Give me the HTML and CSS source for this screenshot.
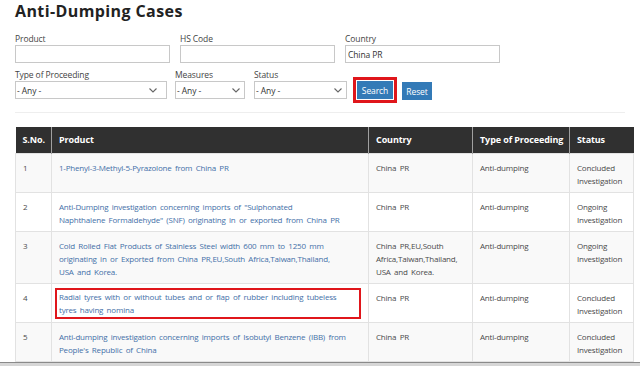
FILE: index.html
```html
<!DOCTYPE html>
<html lang="en">

<head>
    <meta charset="UTF-8" />
    <meta name="viewport" content="width=device-width, initial-scale=1.0" />
    <title>Anti-Dumping Cases</title>
    <link rel="stylesheet" href="styles.css">
</head>

<body>
    <div class="page">
        <h1 class="page-title">Anti-Dumping Cases</h1>

        <form class="filters">
            <div class="filter-row">
                <div class="field field-wide">
                    <label>Product</label>
                    <input type="text" class="text-input">
                </div>
                <div class="field field-wide">
                    <label>HS Code</label>
                    <input type="text" class="text-input">
                </div>
                <div class="field field-wide">
                    <label>Country</label>
                    <input type="text" class="text-input" value="China PR">
                </div>
            </div>

            <div class="filter-row filter-row-second">
                <div class="field field-type">
                    <label>Type of Proceeding</label>
                    <div class="select select-type">
                        <span>- Any -</span>
                        <svg class="chevron" width="8" height="5" viewBox="0 0 8 5"><polyline points="0.5,0.5 4,4 7.5,0.5" /></svg>
                    </div>
                </div>
                <div class="field field-measures">
                    <label>Measures</label>
                    <div class="select">
                        <span>- Any -</span>
                        <svg class="chevron" width="8" height="5" viewBox="0 0 8 5"><polyline points="0.5,0.5 4,4 7.5,0.5" /></svg>
                    </div>
                </div>
                <div class="field field-status">
                    <label>Status</label>
                    <div class="select">
                        <span>- Any -</span>
                        <svg class="chevron" width="8" height="5" viewBox="0 0 8 5"><polyline points="0.5,0.5 4,4 7.5,0.5" /></svg>
                    </div>
                </div>
                <div class="highlight-box">
                    <button type="button" class="btn">Search</button>
                </div>
                <button type="button" class="btn btn-reset">Reset</button>
            </div>
        </form>

        <div class="divider"></div>

        <table class="cases">
            <colgroup>
                <col class="col-sno">
                <col class="col-product">
                <col class="col-country">
                <col class="col-type">
                <col class="col-status">
            </colgroup>
            <thead>
                <tr>
                    <th>S.No.</th>
                    <th>Product</th>
                    <th>Country</th>
                    <th>Type of Proceeding</th>
                    <th>Status</th>
                </tr>
            </thead>
            <tbody>
                <tr>
                    <td>1</td>
                    <td><a href="#">1-Phenyl-3-Methyl-5-Pyrazolone from China PR</a></td>
                    <td>China PR</td>
                    <td>Anti-dumping</td>
                    <td>Concluded Investigation</td>
                </tr>
                <tr>
                    <td>2</td>
                    <td><a href="#">Anti-Dumping investigation concerning imports of "Sulphonated<br>Naphthalene Formaldehyde" (SNF) originating in or exported from China PR</a></td>
                    <td>China PR</td>
                    <td>Anti-dumping</td>
                    <td>Ongoing Investigation</td>
                </tr>
                <tr>
                    <td>3</td>
                    <td><a href="#">Cold Rolled Flat Products of Stainless Steel width 600 mm to 1250 mm originating in or Exported from China PR,EU,South Africa,Taiwan,Thailand,<br>USA and Korea.</a></td>
                    <td>China PR,EU,South Africa,Taiwan,Thailand, USA and Korea.</td>
                    <td>Anti-dumping</td>
                    <td>Ongoing Investigation</td>
                </tr>
                <tr>
                    <td>4</td>
                    <td><a href="#" class="marked">Radial tyres with or without tubes and or flap of rubber including tubeless tyres having nomina</a></td>
                    <td>China PR</td>
                    <td>Anti-dumping</td>
                    <td>Concluded Investigation</td>
                </tr>
                <tr>
                    <td>5</td>
                    <td><a href="#">Anti-dumping investigation concerning imports of Isobutyl Benzene (IBB) from People's Republic of China</a></td>
                    <td>China PR</td>
                    <td>Anti-dumping</td>
                    <td>Concluded Investigation</td>
                </tr>
            </tbody>
        </table>
    </div>
    <div class="bottom-bar"></div>
</body>

</html>
```

FILE: styles.css
```css
:root {
    --text: #4a4a4a;
    --link: #4470a8;
    --border: #e2e2e2;
    --input-border: #c8c8c8;
    --btn: #337ab7;
    --head: #303030;
    --mark: #e0161b;
}

* {
    margin: 0;
    padding: 0;
    box-sizing: border-box;
    font-family: 'Open Sans', 'Noto Sans', sans-serif;
}

body {
    background: #fff;
    color: var(--text);
    font-size: 8.5px;
    letter-spacing: -0.1px;
}

.page {
    padding: 0 15px;
}

.page-title {
    font-size: 16px;
    line-height: 22px;
    font-weight: 700;
    color: #222;
    letter-spacing: 0.4px;
}

.filters {
    margin-top: 11px;
}

.filter-row {
    display: flex;
    gap: 10px;
}

.filter-row-second {
    margin-top: 6px;
    gap: 0;
    align-items: flex-end;
}

.field {
    display: flex;
    flex-direction: column;
}

.field label {
    line-height: 12px;
    color: #444;
}

.field-wide {
    width: 155px;
}

.field-type {
    width: 152px;
}

.field-measures {
    width: 70px;
    margin-left: 8px;
}

.field-status {
    width: 93px;
    margin-left: 9px;
}

.text-input {
    height: 18px;
    border: 1px solid var(--input-border);
    padding: 0 2px;
    font-size: 8.5px;
    letter-spacing: -0.1px;
    color: #333;
    outline: none;
}

.select {
    height: 18px;
    border: 1px solid var(--input-border);
    display: flex;
    align-items: center;
    justify-content: space-between;
    padding: 0 4px 0 1px;
    color: #333;
}

.select-type {
    padding-right: 9px;
}

.chevron {
    fill: none;
    stroke: #666;
    stroke-width: 1.1;
}

.highlight-box {
    margin-left: 6px;
    margin-bottom: -4px;
    border: 3px solid var(--mark);
    padding: 1px;
    display: flex;
}

.btn {
    height: 18px;
    width: 36px;
    border: none;
    background: var(--btn);
    color: #fff;
    font-size: 8.5px;
    letter-spacing: -0.1px;
    cursor: pointer;
}

.btn-reset {
    width: 30px;
    margin-left: 5px;
    margin-bottom: -1px;
}

.divider {
    margin-top: 13px;
    height: 1px;
    background: #eee;
}

.cases {
    margin-top: 14px;
    width: 618px;
    border-collapse: collapse;
    table-layout: fixed;
    font-size: 8px;
    letter-spacing: -0.2px;
    word-spacing: 1.5px;
}

.col-sno { width: 36px; }
.col-product { width: 317px; }
.col-country { width: 104px; }
.col-type { width: 97px; }
.col-status { width: 64px; }

.cases th {
    background: var(--head);
    color: #fff;
    font-size: 9px;
    font-weight: 700;
    letter-spacing: -0.1px;
    word-spacing: 0;
    text-align: left;
    height: 26px;
    padding: 0 7px;
    border-left: 1px solid #a0a0a0;
    white-space: nowrap;
}

.cases th:first-child {
    border-left: none;
}

.cases td {
    padding: 7px 7px 5px;
    line-height: 13px;
    vertical-align: top;
    border: 1px solid var(--border);
}

.cases td:last-child {
    padding-right: 4px;
}

.cases tbody tr:nth-child(odd) {
    background: #f9f9f9;
}

.cases a {
    color: var(--link);
    text-decoration: none;
}

.cases a.marked {
    display: inline-block;
    border: 2px solid var(--mark);
    padding: 0 2px 1px;
    margin: -3px 0 -2px -4px;
}

.bottom-bar {
    height: 4px;
    border-top: 1px solid #8a8a8a;
    background: #d6d6d6;
}
```
